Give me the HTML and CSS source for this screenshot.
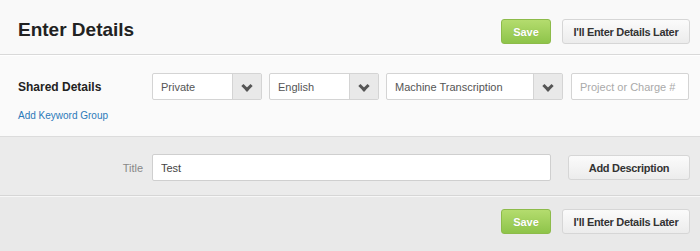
FILE: index.html
```html
<!DOCTYPE html>
<html lang="en">
<head>
  <meta charset="UTF-8">
  <title>Enter Details</title>
  <link rel="stylesheet" href="styles.css">
</head>
<body>
  <div class="panel">
    <!-- Cabecera -->
    <div class="cabecera">
      <h1>Enter Details</h1>
      <div class="acciones">
        <button class="btn-guardar">Save</button>
        <button class="btn-gris btn-luego">I'll Enter Details Later</button>
      </div>
    </div>

    <!-- Datos compartidos -->
    <div class="compartidos">
      <div class="fila">
        <strong class="etiqueta">Shared Details</strong>
        <div class="selector ancho-privado">
          <span>Private</span>
          <span class="flecha"></span>
        </div>
        <div class="selector ancho-idioma">
          <span>English</span>
          <span class="flecha"></span>
        </div>
        <div class="selector ancho-tipo">
          <span>Machine Transcription</span>
          <span class="flecha"></span>
        </div>
        <input class="campo campo-proyecto" type="text" placeholder="Project or Charge #">
      </div>
      <a href="#" class="enlace">Add Keyword Group</a>
    </div>

    <!-- Archivo -->
    <div class="archivo">
      <label class="titulo">Title</label>
      <input class="campo campo-titulo" type="text" value="Test">
      <button class="btn-gris btn-descripcion">Add Description</button>
    </div>

    <!-- Pie -->
    <div class="pie">
      <button class="btn-guardar">Save</button>
      <button class="btn-gris btn-luego">I'll Enter Details Later</button>
    </div>
  </div>
</body>
</html>
```

FILE: styles.css
```css
body {
  margin: 0;
  font-family: 'Liberation Sans', Arial, sans-serif;
  background: #e9e9e9;
}
.panel {
  width: 700px;
  height: 251px;
  overflow: hidden;
}
/* Cabecera */
.cabecera {
  background: #f9f9f9;
  height: 55px;
  border-bottom: 1px solid #d9d9d9;
  display: flex;
  align-items: center;
  justify-content: space-between;
  padding: 0 10px 0 18px;
  box-sizing: border-box;
}
.cabecera h1 {
  margin: 5px 0 0;
  font-size: 19px;
  font-weight: bold;
  color: #222;
}
.acciones {
  display: flex;
  gap: 11px;
  margin-top: 9px;
}
/* Botones */
.btn-guardar {
  width: 50px;
  height: 25px;
  padding: 0;
  border: 1px solid #8dbb4a;
  border-radius: 3px;
  background: linear-gradient(#b4dc6e, #8ec44a);
  color: #fff;
  font-family: inherit;
  font-size: 11px;
  font-weight: bold;
  text-shadow: 0 0 1px rgba(0,0,0,0.15);
  cursor: pointer;
}
.btn-gris {
  height: 25px;
  padding: 0;
  border: 1px solid #d6d6d6;
  border-radius: 3px;
  background: linear-gradient(#fbfbfb, #ececec);
  color: #333;
  font-family: inherit;
  font-size: 11px;
  font-weight: bold;
  letter-spacing: -0.3px;
  white-space: nowrap;
  cursor: pointer;
}
.btn-luego {
  width: 128px;
}
.btn-descripcion {
  width: 122px;
  margin-left: 17px;
}
/* Datos compartidos */
.compartidos {
  background: #fafafa;
  height: 82px;
  border-top: 1px solid #fff;
  border-bottom: 1px solid #dcdcdc;
  padding: 17px 0 0 18px;
  box-sizing: border-box;
}
.fila {
  display: flex;
  align-items: center;
  gap: 7px;
}
.etiqueta {
  width: 127px;
  font-size: 12px;
  color: #222;
}
.selector {
  height: 27px;
  display: flex;
  align-items: stretch;
  background: #fff;
  border: 1px solid #d4d4d4;
  border-radius: 2px;
  box-sizing: border-box;
  font-size: 11px;
  color: #555;
  flex-shrink: 0;
}
.selector span:first-child {
  flex: 1;
  display: flex;
  align-items: center;
  padding-left: 8px;
}
.flecha {
  width: 28px;
  background: #e9e9e9;
  border-left: 1px solid #d4d4d4;
  position: relative;
}
.flecha::after {
  content: "";
  position: absolute;
  left: 10px;
  top: 8px;
  width: 5px;
  height: 5px;
  border-right: 3px solid #555;
  border-bottom: 3px solid #555;
  transform: rotate(45deg);
}
.ancho-privado { width: 110px; }
.ancho-idioma { width: 110px; }
.ancho-tipo { width: 177px; margin-right: 1px; }
.campo {
  height: 27px;
  border: 1px solid #d4d4d4;
  border-radius: 2px;
  box-sizing: border-box;
  font-family: inherit;
  font-size: 11px;
  color: #444;
  padding: 0 8px;
  background: #fff;
  flex-shrink: 0;
}
.campo::placeholder {
  color: #aaa;
}
.campo-proyecto {
  width: 118px;
}
.enlace {
  display: inline-block;
  margin-top: 10px;
  font-size: 10px;
  color: #2b79b9;
  text-decoration: none;
}
/* Archivo */
.archivo {
  background: #ebebeb;
  height: 59px;
  border-bottom: 1px solid #d6d6d6;
  display: flex;
  align-items: center;
  box-sizing: border-box;
  padding-top: 3px;
}
.titulo {
  width: 143px;
  text-align: right;
  font-size: 11px;
  color: #888;
  margin-right: 9px;
}
.campo-titulo {
  width: 399px;
  border-color: #cfcfcf;
}
/* Pie */
.pie {
  border-top: 1px solid #f7f7f7;
  display: flex;
  justify-content: flex-end;
  gap: 11px;
  padding: 12px 10px 0 0;
}
```
